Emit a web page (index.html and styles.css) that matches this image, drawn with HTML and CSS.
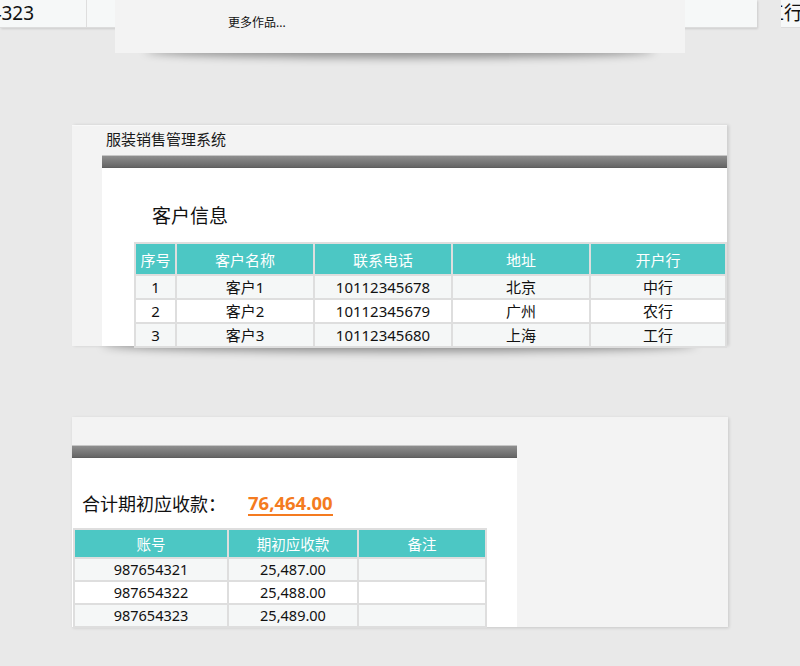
FILE: index.html
```html
<!DOCTYPE html>
<html lang="zh">
<head>
<meta charset="utf-8">
<title>服装销售管理系统</title>
<link rel="stylesheet" href="styles.css">
</head>
<body>
<div class="top">
  <div class="strip">
    <div class="cell c1"><span>987654323</span></div>
    <div class="cell c2"></div>
  </div>
  <div class="strip2"><span>工行</span></div>
  <div class="menu"><span class="more">更多作品...</span></div>
</div>

<section class="card card1">
  <div class="card-head">服装销售管理系统</div>
  <div class="card-body">
    <div class="gutter"></div>
    <div class="main">
      <div class="bar"></div>
      <h2 class="sec-title">客户信息</h2>
      <table class="grid grid1">
        <thead>
          <tr><th class="w1">序号</th><th class="w2">客户名称</th><th class="w2">联系电话</th><th class="w2">地址</th><th>开户行</th></tr>
        </thead>
        <tbody>
          <tr class="alt"><td>1</td><td>客户1</td><td>10112345678</td><td>北京</td><td>中行</td></tr>
          <tr><td>2</td><td>客户2</td><td>10112345679</td><td>广州</td><td>农行</td></tr>
          <tr class="alt"><td>3</td><td>客户3</td><td>10112345680</td><td>上海</td><td>工行</td></tr>
        </tbody>
      </table>
    </div>
  </div>
</section>

<section class="card card2">
  <div class="card2-head"></div>
  <div class="card2-body">
    <div class="panel">
      <div class="bar"></div>
      <div class="total">
        <span class="total-label">合计期初应收款：</span>
        <span class="total-value">76,464.00</span>
      </div>
      <table class="grid grid2">
        <thead>
          <tr><th class="v1">账号</th><th class="v2">期初应收款</th><th>备注</th></tr>
        </thead>
        <tbody>
          <tr class="alt"><td>987654321</td><td>25,487.00</td><td></td></tr>
          <tr><td>987654322</td><td>25,488.00</td><td></td></tr>
          <tr class="alt"><td>987654323</td><td>25,489.00</td><td></td></tr>
        </tbody>
      </table>
    </div>
  </div>
</section>
</body>
</html>
```

FILE: styles.css
```css
* { box-sizing: border-box; }
html, body { margin: 0; padding: 0; }
body {
  background: #e9e9e9;
  font-family: "Noto Sans", "Noto Sans CJK SC", sans-serif;
  color: #111;
  width: 800px;
  height: 666px;
  overflow: hidden;
}

/* top leftover */
.top {
  position: relative;
  height: 53px;
  display: flex;
  align-items: flex-start;
}
.strip {
  width: 757px;
  height: 28px;
  display: flex;
  background: #f6f8f8;
  border-bottom: 1px solid #dcdcdc;
  box-shadow: 1px 1px 2px rgba(0,0,0,0.12);
}
.cell {
  height: 27px;
  overflow: hidden;
  display: flex;
  align-items: center;
  font-size: 19px;
  line-height: 27px;
  white-space: nowrap;
}
.c1 {
  width: 87px;
  justify-content: flex-end;
  padding-right: 52px;
  border-right: 1px solid #dedede;
}
.c2 { flex: 1; }
.strip2 {
  margin-left: 24px;
  width: 19px;
  height: 28px;
  overflow: hidden;
  background: #f6f8f8;
  border-bottom: 1px solid #dcdcdc;
  font-size: 19px;
  line-height: 27px;
  white-space: nowrap;
}
.strip2 span { margin-left: -16px; display: inline-block; }
.menu {
  position: absolute;
  left: 115px;
  top: 0;
  width: 570px;
  height: 53px;
  background: #f3f3f3;
}
.menu::after {
  content: "";
  position: absolute;
  left: 30px;
  right: 30px;
  bottom: 3px;
  height: 14px;
  border-radius: 50%;
  box-shadow: 0 8px 8px rgba(0,0,0,0.38);
  z-index: -1;
}
.more {
  position: absolute;
  left: 113px;
  top: 14px;
  font-size: 12px;
  line-height: 18px;
  color: #111;
}

/* cards */
.card {
  position: relative;
  margin-left: 72px;
  background: #f3f3f3;
}
.card1 {
  margin-top: 72px;
  width: 655px;
  height: 221px;
  box-shadow: 2px 0 3px rgba(0,0,0,0.12);
}
.card1::after {
  content: "";
  position: absolute;
  left: 30px;
  right: 30px;
  bottom: 3px;
  height: 14px;
  border-radius: 50%;
  box-shadow: 0 9px 9px rgba(0,0,0,0.38);
  z-index: -1;
}
.card-head {
  height: 30px;
  padding-left: 34px;
  font-size: 15px;
  line-height: 26px;
  color: #1a1a1a;
  border-top: 1px solid #f8f8f8;
}
.card-body {
  display: flex;
  height: 191px;
}
.gutter { width: 30px; }
.main {
  flex: 1;
  background: #fff;
}
.bar {
  height: 13px;
  border-top: 1px solid #c6c6c6;
  background: linear-gradient(#8e8e8e, #666);
  border-bottom: 1px solid #5e5e5e;
}
.sec-title {
  margin: 0;
  padding: 36px 0 0 50px;
  height: 74px;
  font-size: 19px;
  font-weight: normal;
  line-height: 24px;
  color: #111;
}

/* tables */
.grid {
  border-collapse: collapse;
  table-layout: fixed;
  text-align: center;
}
.grid th, .grid td {
  border: 2px solid #dedede;
  padding: 0;
  white-space: nowrap;
}
.grid th {
  background: #4cc7c4;
  color: #fff;
  font-weight: normal;
}
.grid td { background: #fff; }
.grid tr.alt td { background: #f5f7f7; }

.grid1 {
  margin-left: 32px;
  width: 593px;
  font-size: 15px;
}
.grid1 th { height: 32px; }
.grid1 td { height: 24px; line-height: 20px; }
.grid1 .w1 { width: 41px; }
.grid1 .w2 { width: 138px; }

/* card 2 */
.card2 {
  margin-top: 71px;
  width: 656px;
  height: 210px;
  box-shadow: 1px 1px 3px rgba(0,0,0,0.15);
}
.card2-head { height: 28px; }
.card2-body { display: flex; height: 182px; }
.panel {
  width: 445px;
  background: #fff;
}
.total {
  height: 70px;
  padding: 34px 0 0 10px;
  display: flex;
  align-items: flex-start;
}
.total-label {
  font-size: 18px;
  line-height: 24px;
  width: 166px;
  color: #111;
}
.total-value {
  font-size: 18.5px;
  line-height: 22px;
  font-weight: bold;
  color: #f47b20;
  border-bottom: 2px solid #f47b20;
}
.grid2 {
  margin-left: 1px;
  width: 414px;
  font-size: 14.5px;
}
.grid2 th { height: 29px; }
.grid2 td { height: 23px; line-height: 19px; }
.grid2 .v1 { width: 154px; }
.grid2 .v2 { width: 130px; }
```
